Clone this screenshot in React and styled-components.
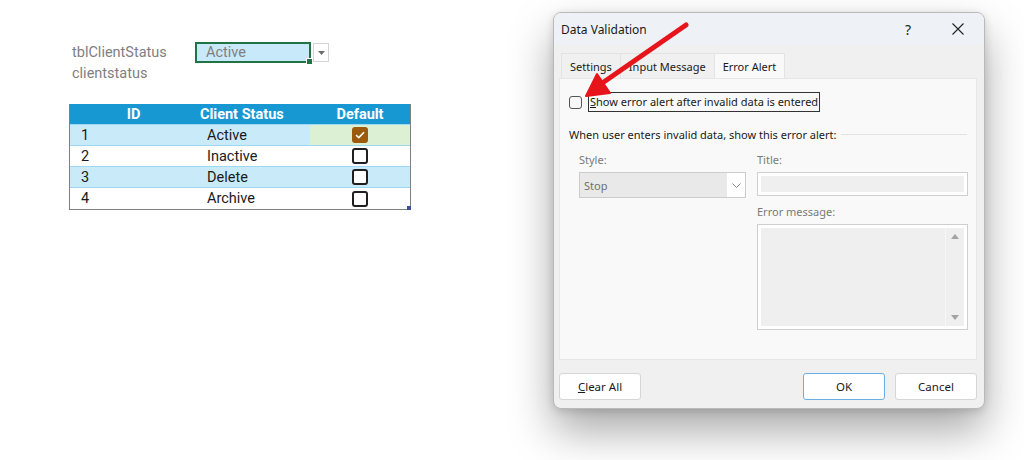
import React from "react";
import styled, { createGlobalStyle } from "styled-components";

const GlobalStyle = createGlobalStyle`
  html, body {
    margin: 0;
    padding: 0;
    background: #ffffff;
  }
`;

const Page = styled.div`
  position: relative;
  width: 1024px;
  height: 460px;
  overflow: hidden;
  display: flex;
  align-items: flex-start;
  background: #ffffff;
`;

/* ---------- sheet side ---------- */

const Sheet = styled.div`
  width: 484px;
  padding: 42px 0 0 69px;
  font-family: Roboto, "Liberation Sans", sans-serif;
  font-size: 14.5px;
`;

const NameRow = styled.div`
  display: flex;
  align-items: center;
  height: 21px;
`;

const NameLabel = styled.div`
  width: 126px;
  padding-left: 3px;
  box-sizing: border-box;
  color: #7f7f7f;
`;

const ActiveCell = styled.div`
  position: relative;
  width: 116px;
  height: 21px;
  box-sizing: border-box;
  border: 2px solid #217346;
  background: #c8e9f9;
  color: #7f7f7f;
  padding-left: 9px;
  display: flex;
  align-items: center;
`;

const FillHandle = styled.span`
  position: absolute;
  right: -4px;
  bottom: -4px;
  width: 5px;
  height: 5px;
  background: #217346;
  border: 1px solid #ffffff;
`;

const DropButton = styled.div`
  width: 16px;
  height: 19px;
  margin-left: 2px;
  box-sizing: border-box;
  border: 1px solid #d4d4d4;
  background: #ffffff;
  display: flex;
  align-items: center;
  justify-content: center;
`;

const SubName = styled.div`
  color: #7f7f7f;
  padding-left: 3px;
  height: 21px;
  line-height: 21px;
`;

const Table = styled.div`
  margin-top: 20px;
  width: 342px;
  border: 1px solid #7f7f7f;
  border-top: none;
  box-sizing: border-box;
  position: relative;
`;

const TableRow = styled.div`
  display: grid;
  grid-template-columns: 127px 113px 1fr;
  height: 21px;
  background: ${(p) => (p.$head ? "#1898d3" : p.$band ? "#c9ebf9" : "#ffffff")};
  color: ${(p) => (p.$head ? "#ffffff" : "#1a1a1a")};
  font-weight: ${(p) => (p.$head ? 700 : 400)};
  border-bottom: ${(p) => (p.$last ? "none" : "1px solid #9fd8f1")};
  box-sizing: border-box;
`;

const Cell = styled.div`
  display: flex;
  align-items: center;
  justify-content: ${(p) => p.$align || "flex-start"};
  padding-left: ${(p) => p.$pad || 0}px;
  background: ${(p) => p.$bg || "transparent"};
`;

const Box = styled.span`
  width: 16px;
  height: 16px;
  box-sizing: border-box;
  border-radius: 3px;
  border: 2px solid ${(p) => (p.$checked ? "#9c5a0d" : "#1f1f1f")};
  background: ${(p) => (p.$checked ? "#9c5a0d" : "#ffffff")};
  display: flex;
  align-items: center;
  justify-content: center;
`;

const CornerMark = styled.span`
  position: absolute;
  right: -1px;
  bottom: -1px;
  width: 4px;
  height: 4px;
  background: #3f4fa0;
`;

/* ---------- dialog ---------- */

const Dialog = styled.div`
  margin-top: 12px;
  width: 432px;
  height: 397px;
  box-sizing: border-box;
  border: 1px solid #b9b9b9;
  border-radius: 8px;
  background: #f0f0f0;
  box-shadow: 0 22px 44px rgba(0, 0, 0, 0.34), 0 2px 8px rgba(0, 0, 0, 0.14);
  overflow: hidden;
  display: flex;
  flex-direction: column;
  font-family: "Noto Sans", "Open Sans", sans-serif;
  font-size: 11px;
  color: #1a1a1a;
`;

const TitleBar = styled.div`
  height: 32px;
  background: #eef2f7;
  display: flex;
  align-items: center;
  padding: 0 1px 0 7px;
  font-size: 12px;
`;

const TitleText = styled.div`
  flex: 1;
`;

const TitleButton = styled.div`
  width: 50px;
  display: flex;
  justify-content: center;
  align-items: center;
  font-size: 14px;
  color: #222;
`;

const Body = styled.div`
  flex: 1;
  display: flex;
  flex-direction: column;
  padding: 8px 7px 8px 5px;
`;

const Tabs = styled.div`
  display: flex;
  padding-left: 2px;
  height: 25px;
`;

const Tab = styled.div`
  padding: 0 8px;
  display: flex;
  align-items: center;
  background: ${(p) => (p.$active ? "#f9f9f9" : "#f0f0f0")};
  border: 1px solid #e3e3e3;
  border-right: ${(p) => (p.$noRight ? "none" : "1px solid #e3e3e3")};
  border-bottom: none;
`;

const Panel = styled.div`
  height: 282px;
  box-sizing: border-box;
  background: #f9f9f9;
  border: 1px solid #e6e6e6;
  padding: 13px 9px 0 9px;
`;

const CheckRow = styled.div`
  display: flex;
  align-items: center;
  gap: 6px;
`;

const SmallCheck = styled.span`
  width: 13px;
  height: 13px;
  box-sizing: border-box;
  border: 1px solid #555;
  border-radius: 3px;
  background: #f7f7f7;
`;

const FocusLabel = styled.span`
  border: 1px solid #333;
  padding: 0 1px;
  height: 18px;
  line-height: 17px;
`;

const GroupHead = styled.div`
  margin-top: 15px;
  display: flex;
  align-items: center;
  gap: 4px;
  white-space: nowrap;
`;

const GroupLine = styled.div`
  flex: 1;
  height: 1px;
  background: #e3e3e3;
`;

const Fields = styled.div`
  margin-top: 9px;
  padding-left: 10px;
  display: grid;
  grid-template-columns: 167px 211px;
  column-gap: 11px;
`;

const FieldCol = styled.div`
  display: flex;
  flex-direction: column;
`;

const FieldLabel = styled.div`
  color: #7a7a7a;
  height: 18px;
  line-height: 18px;
  margin-bottom: ${(p) => p.$gap || 3}px;
  margin-top: ${(p) => p.$top || 0}px;
`;

const Select = styled.div`
  height: 26px;
  box-sizing: border-box;
  border: 1px solid #cccccc;
  background: #e9e9e9;
  display: flex;
  align-items: stretch;
  color: #707070;
`;

const SelectValue = styled.div`
  flex: 1;
  display: flex;
  align-items: center;
  padding-left: 4px;
`;

const SelectArrow = styled.div`
  width: 18px;
  background: #ffffff;
  display: flex;
  align-items: center;
  justify-content: center;
`;

const TextBox = styled.div`
  height: ${(p) => p.$h}px;
  box-sizing: border-box;
  border: 1px solid #cfcfcf;
  background: #ffffff;
  padding: 3px;
  display: flex;
`;

const TextInner = styled.div`
  flex: 1;
  background: #efefef;
`;

const ScrollBar = styled.div`
  width: 18px;
  background: #efefef;
  border-left: 1px solid #f7f7f7;
  display: flex;
  flex-direction: column;
  justify-content: space-between;
  align-items: center;
  padding: 6px 0;
`;

const Footer = styled.div`
  margin-top: 13px;
  display: flex;
  gap: 10px;
`;

const Button = styled.div`
  width: 82px;
  height: 27px;
  box-sizing: border-box;
  border: 1px solid ${(p) => (p.$primary ? "#6aaee3" : "#d6d6d6")};
  border-radius: 3px;
  background: #ffffff;
  display: flex;
  align-items: center;
  justify-content: center;
  font-size: 11.5px;
  margin-left: ${(p) => (p.$push ? "auto" : "0")};
`;

const Under = styled.span`
  text-decoration: underline;
`;

const ArrowLayer = styled.svg`
  position: absolute;
  left: 0;
  top: 0;
  pointer-events: none;
`;

const rows = [
  { id: 1, status: "Active", checked: true },
  { id: 2, status: "Inactive" },
  { id: 3, status: "Delete" },
  { id: 4, status: "Archive" },
];

function Check({ checked }) {
  return (
    <Box $checked={checked}>
      {checked && (
        <svg width="10" height="8" viewBox="0 0 10 8">
          <polyline points="1,4.2 3.8,6.6 9,1.2" fill="none" stroke="#fff" strokeWidth="1.6" />
        </svg>
      )}
    </Box>
  );
}

function Tri({ up }) {
  return (
    <svg width="8" height="5" viewBox="0 0 8 5">
      <polygon points={up ? "0,5 8,5 4,0" : "0,0 8,0 4,5"} fill="#a3a3a3" />
    </svg>
  );
}

export default function App() {
  return (
    <>
      <GlobalStyle />
      <Page>
        <Sheet>
          <NameRow>
            <NameLabel>tblClientStatus</NameLabel>
            <ActiveCell>
              Active
              <FillHandle />
            </ActiveCell>
            <DropButton>
              <svg width="7" height="4" viewBox="0 0 7 4">
                <polygon points="0,0 7,0 3.5,4" fill="#6d6d6d" />
              </svg>
            </DropButton>
          </NameRow>
          <SubName>clientstatus</SubName>

          <Table>
            <TableRow $head>
              <Cell $align="center">ID</Cell>
              <Cell $pad={3}>Client Status</Cell>
              <Cell $align="center">Default</Cell>
            </TableRow>
            {rows.map((r, i) => (
              <TableRow key={r.id} $band={i % 2 === 0} $last={i === rows.length - 1}>
                <Cell $pad={11}>{r.id}</Cell>
                <Cell $pad={10}>{r.status}</Cell>
                <Cell $align="center" $bg={r.checked ? "#dcf0d3" : undefined}>
                  <Check checked={r.checked} />
                </Cell>
              </TableRow>
            ))}
            <CornerMark />
          </Table>
        </Sheet>

        <Dialog>
          <TitleBar>
            <TitleText>Data Validation</TitleText>
            <TitleButton>?</TitleButton>
            <TitleButton>
              <svg width="12" height="12" viewBox="0 0 12 12">
                <path d="M0.5 0.5 L11.5 11.5 M11.5 0.5 L0.5 11.5" stroke="#222" strokeWidth="1.1" />
              </svg>
            </TitleButton>
          </TitleBar>
          <Body>
            <Tabs>
              <Tab $noRight>Settings</Tab>
              <Tab $noRight>Input Message</Tab>
              <Tab $active>Error Alert</Tab>
            </Tabs>
            <Panel>
              <CheckRow>
                <SmallCheck />
                <FocusLabel>
                  <Under>S</Under>how error alert after invalid data is entered
                </FocusLabel>
              </CheckRow>
              <GroupHead>
                When user enters invalid data, show this error alert:
                <GroupLine />
              </GroupHead>
              <Fields>
                <FieldCol>
                  <FieldLabel>Style:</FieldLabel>
                  <Select>
                    <SelectValue>Stop</SelectValue>
                    <SelectArrow>
                      <svg width="9" height="5" viewBox="0 0 9 5">
                        <polyline points="0.5,0.5 4.5,4.5 8.5,0.5" fill="none" stroke="#888" strokeWidth="1" />
                      </svg>
                    </SelectArrow>
                  </Select>
                </FieldCol>
                <FieldCol>
                  <FieldLabel>Title:</FieldLabel>
                  <TextBox $h={24}>
                    <TextInner />
                  </TextBox>
                  <FieldLabel $top={7} $gap={3}>Error message:</FieldLabel>
                  <TextBox $h={106}>
                    <TextInner />
                    <ScrollBar>
                      <Tri up />
                      <Tri />
                    </ScrollBar>
                  </TextBox>
                </FieldCol>
              </Fields>
            </Panel>
            <Footer>
              <Button>
                <span>
                  <Under>C</Under>lear All
                </span>
              </Button>
              <Button $primary $push>OK</Button>
              <Button>Cancel</Button>
            </Footer>
          </Body>
        </Dialog>

        <ArrowLayer width="1024" height="460" viewBox="0 0 1024 460">
          <line x1="686" y1="25" x2="598" y2="86" stroke="#e8141b" strokeWidth="5" strokeLinecap="round" />
          <polygon points="586,96 610,93 597,74" fill="#e8141b" stroke="#e8141b" strokeWidth="2" strokeLinejoin="round" />
        </ArrowLayer>
      </Page>
    </>
  );
}
